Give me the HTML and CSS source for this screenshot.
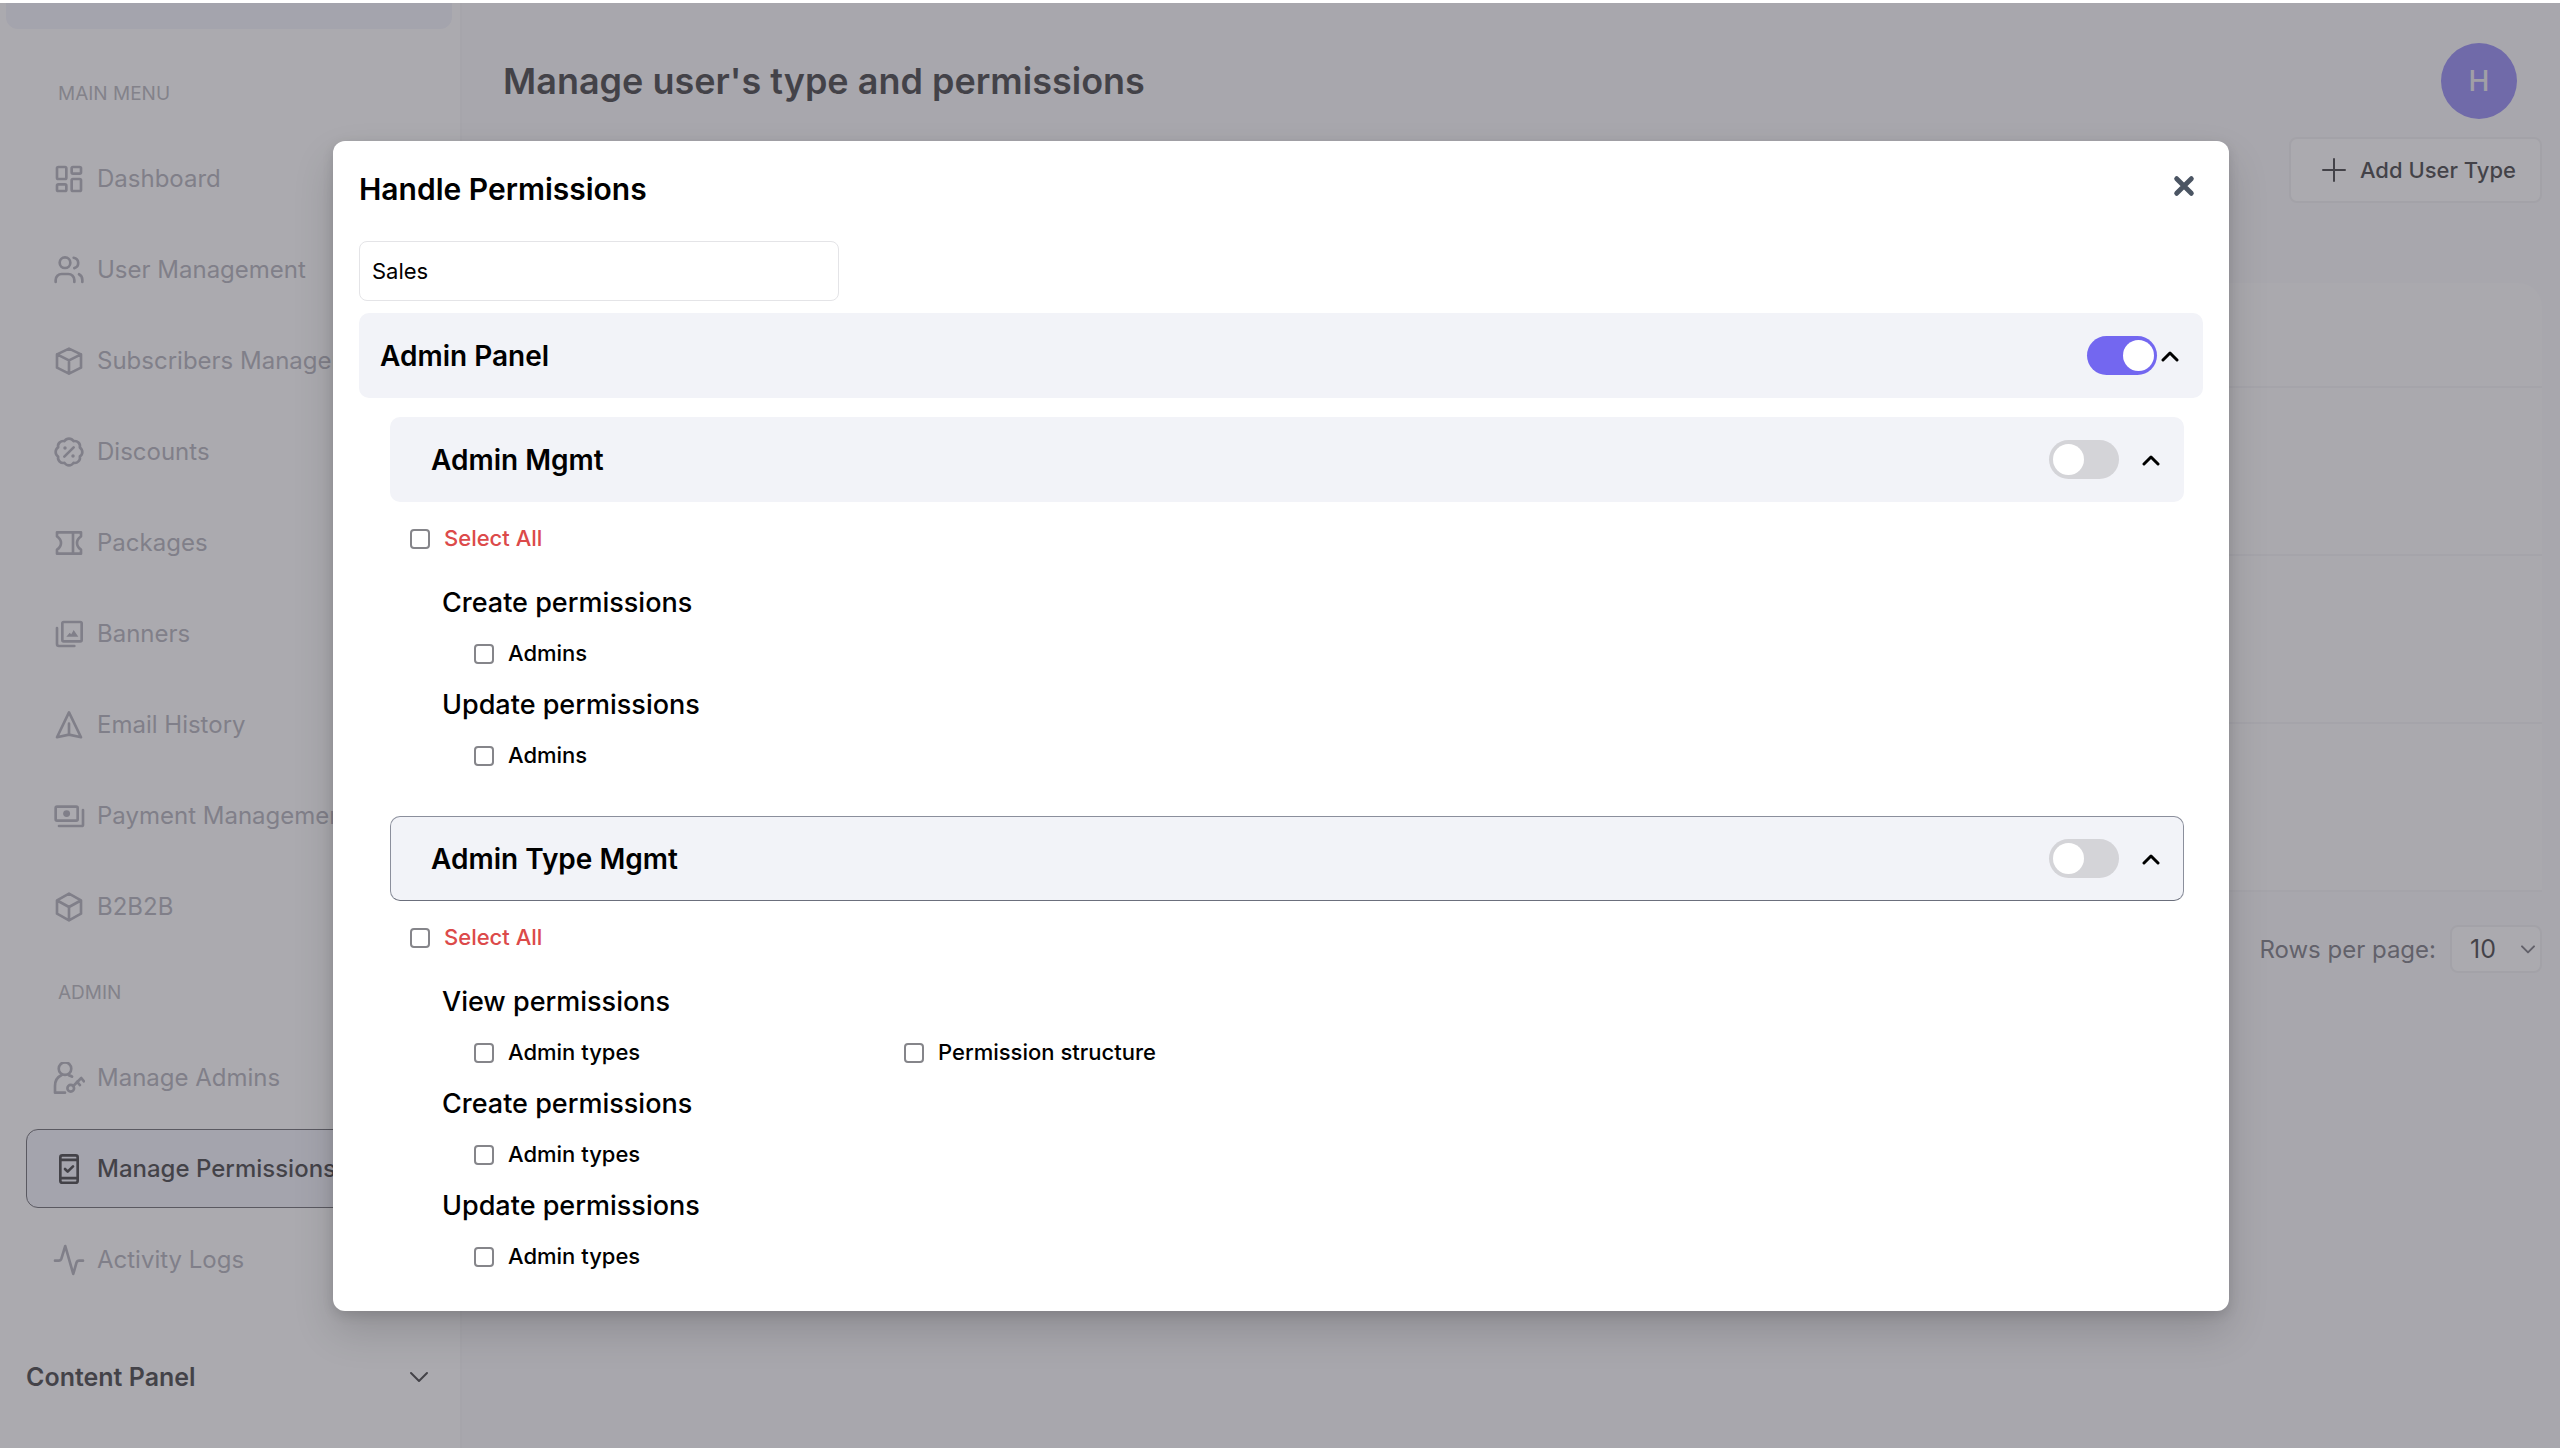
FILE: index.html
```html
<!DOCTYPE html>
<html lang="en">
<head>
    <meta charset="UTF-8">
    <meta name="viewport" content="width=device-width, initial-scale=1.0">
    <title>Manage user's type and permissions</title>
    <link rel="stylesheet" href="styles.css">
</head>
<body>
    <div class="page">
        <aside class="sidebar">
            <div class="panel-top"></div>
            <h2 class="menu-label">MAIN MENU</h2>
            <nav class="menu">
                <a href="#" class="menu-item">
                    <svg class="icon" viewBox="0 0 24 24"><rect x="3" y="3" width="7" height="9" rx="1"/><rect x="14" y="3" width="7" height="5" rx="1"/><rect x="14" y="12" width="7" height="9" rx="1"/><rect x="3" y="16" width="7" height="5" rx="1"/></svg>
                    <span>Dashboard</span>
                </a>
                <a href="#" class="menu-item">
                    <svg class="icon" viewBox="0 0 24 24"><circle cx="9" cy="6.5" r="4"/><path d="M2 21v-1.5A4.5 4.5 0 0 1 6.5 15h5a4.5 4.5 0 0 1 4.5 4.5V21M15.5 2.8a4 4 0 0 1 .5 7.8M19.500 15.200c1.500.8 2.500 2.300 2.500 4.300V21"/></svg>
                    <span>User Management</span>
                </a>
                <a href="#" class="menu-item">
                    <svg class="icon" viewBox="0 0 24 24"><path d="M12 2.700 21 7v10l-9 4.500L3 17V7zM3 7l9 4.500L21 7M12 11.500v10"/></svg>
                    <span>Subscribers Management</span>
                </a>
                <a href="#" class="menu-item">
                    <svg class="icon" viewBox="0 0 24 24"><path d="M3.850 8.620a4 4 0 0 1 4.780-4.770 4 4 0 0 1 6.740 0 4 4 0 0 1 4.780 4.780 4 4 0 0 1 0 6.740 4 4 0 0 1-4.770 4.780 4 4 0 0 1-6.750 0 4 4 0 0 1-4.780-4.770 4 4 0 0 1 0-6.760zM15.500 8.500l-7 7"/><circle class="dot" cx="9" cy="9" r="1.300"/><circle class="dot" cx="15" cy="15" r="1.300"/></svg>
                    <span>Discounts</span>
                </a>
                <a href="#" class="menu-item">
                    <svg class="icon" viewBox="0 0 24 24"><path d="M3 4h18v3c-1.500 1-3 3-3 5s1.500 4 3 5v3H3v-3c1.500-1 3-3 3-5S4.500 8 3 7zM15 4v16"/></svg>
                    <span>Packages</span>
                </a>
                <a href="#" class="menu-item">
                    <svg class="icon" viewBox="0 0 24 24"><rect x="7" y="3" width="14.500" height="14.500" rx="1"/><path d="M3 7.500v12a1.500 1.500 0 0 0 1.500 1.500H16"/><path class="dot" d="m10 14 2.500-3 1.200 1.200L15.500 9l3.500 5z"/></svg>
                    <span>Banners</span>
                </a>
                <a href="#" class="menu-item">
                    <svg class="icon" viewBox="0 0 24 24"><path d="m12 2.500 9 18.700-9-2-9 2zM12 11v8"/></svg>
                    <span>Email History</span>
                </a>
                <a href="#" class="menu-item">
                    <svg class="icon" viewBox="0 0 24 24"><rect x="2" y="5" width="16.500" height="10.500" rx="1"/><path d="M22.500 7.500v11a1 1 0 0 1-1 1h-17"/><circle class="dot" cx="10.200" cy="10.200" r="2.600"/></svg>
                    <span>Payment Management</span>
                </a>
                <a href="#" class="menu-item">
                    <svg class="icon" viewBox="0 0 24 24"><path d="m12 2 9 5v10l-9 5-9-5V7zM3.500 7.300 12 12l8.500-4.700M12 12v10"/></svg>
                    <span>B2B2B</span>
                </a>
            </nav>
            <h2 class="menu-label">ADMIN</h2>
            <nav class="menu">
                <a href="#" class="menu-item">
                    <svg class="icon" viewBox="0 0 24 24"><circle cx="9" cy="5" r="4.700"/><path d="M9 23H1.500v-5c0-4 2-6.800 5-8.200M12 10c.9.200 1.600.5 2.300 1"/><circle cx="13.300" cy="19.700" r="2.500"/><path d="m15.200 18 6-6 2 2.500M18 14.800l2.200 2.500"/></svg>
                    <span>Manage Admins</span>
                </a>
                <a href="#" class="menu-item active">
                    <svg class="icon" viewBox="0 0 24 24"><rect x="5.500" y="1.800" width="13" height="20.500" rx="1.500"/><path d="M5.500 5.200h13M5.500 18.800h13M9 12l2 2 4-4"/></svg>
                    <span>Manage Permissions</span>
                </a>
                <a href="#" class="menu-item">
                    <svg class="icon" viewBox="0 0 24 24"><path d="M1.500 12.500H4.300c1 0 1.700-.6 2-1.500L9.200 1.500l6 21 2.400-8.500c.3-.9 1-1.500 2-1.500h2.900"/></svg>
                    <span>Activity Logs</span>
                </a>
            </nav>
            <button type="button" class="panel-toggle">
                Content Panel
                <svg class="chevron" viewBox="0 0 24 24"><path d="m4 8 8 8 8-8"/></svg>
            </button>
        </aside>

        <main class="main">
            <header class="header">
                <h1>Manage user's type and permissions</h1>
                <div class="avatar">H</div>
            </header>
            <div class="toolbar">
                <button type="button" class="add-button">
                    <svg class="plus" viewBox="0 0 24 24"><path d="M12 1v22M1 12h22"/></svg>
                    Add User Type
                </button>
            </div>
            <div class="card">
                <div class="card-head"></div>
                <div class="card-row"></div>
                <div class="card-row"></div>
                <div class="card-row"></div>
            </div>
            <div class="pagination">
                <label for="rowsPerPage">Rows per page:</label>
                <div class="select-wrap">
                    <select id="rowsPerPage">
                        <option>10</option>
                        <option>20</option>
                        <option>50</option>
                    </select>
                    <svg class="select-arrow" viewBox="0 0 24 24"><path d="m3 8 9 9 9-9"/></svg>
                </div>
            </div>
        </main>
    </div>

    <div class="overlay">
        <div class="modal" role="dialog" aria-modal="true" aria-labelledby="modalTitle">
            <div class="modal-header">
                <h2 id="modalTitle">Handle Permissions</h2>
                <button type="button" class="close" aria-label="Close">
                    <svg viewBox="0 0 18 18"><path d="m3 3 12 12M15 3 3 15"/></svg>
                </button>
            </div>
            <input type="text" class="name-input" aria-label="User type name" value="Sales">

            <div class="bar">
                <h3>Admin Panel</h3>
                <input type="checkbox" class="switch" aria-label="Admin Panel" checked>
                <button type="button" class="collapse" aria-label="Collapse Admin Panel">
                    <svg class="chevron-up" viewBox="0 0 18 12"><path d="m2 10 7-7 7 7"/></svg>
                </button>
            </div>

            <section class="module">
                <div class="bar sub-bar">
                    <h3>Admin Mgmt</h3>
                    <input type="checkbox" class="switch" aria-label="Admin Mgmt">
                    <button type="button" class="collapse" aria-label="Collapse Admin Mgmt">
                        <svg class="chevron-up" viewBox="0 0 18 12"><path d="m2 10 7-7 7 7"/></svg>
                    </button>
                </div>
                <label class="check select-all"><input type="checkbox"> Select All</label>
                <div class="groups">
                    <h4>Create permissions</h4>
                    <div class="options">
                        <label class="check"><input type="checkbox"> Admins</label>
                    </div>
                    <h4>Update permissions</h4>
                    <div class="options">
                        <label class="check"><input type="checkbox"> Admins</label>
                    </div>
                </div>
            </section>

            <section class="module">
                <div class="bar sub-bar focused">
                    <h3>Admin Type Mgmt</h3>
                    <input type="checkbox" class="switch" aria-label="Admin Type Mgmt">
                    <button type="button" class="collapse" aria-label="Collapse Admin Type Mgmt">
                        <svg class="chevron-up" viewBox="0 0 18 12"><path d="m2 10 7-7 7 7"/></svg>
                    </button>
                </div>
                <label class="check select-all"><input type="checkbox"> Select All</label>
                <div class="groups">
                    <h4>View permissions</h4>
                    <div class="options">
                        <label class="check"><input type="checkbox"> Admin types</label>
                        <label class="check"><input type="checkbox"> Permission structure</label>
                    </div>
                    <h4>Create permissions</h4>
                    <div class="options">
                        <label class="check"><input type="checkbox"> Admin types</label>
                    </div>
                    <h4>Update permissions</h4>
                    <div class="options">
                        <label class="check"><input type="checkbox"> Admin types</label>
                    </div>
                </div>
            </section>
        </div>
    </div>
</body>
</html>
```
FILE: styles.css
```css
* {
    box-sizing: border-box;
}
body {
    margin: 0;
    font-family: Inter, Roboto, sans-serif;
    font-size: 24px;
    color: #09090b;
    background-color: #fff;
}
h1, h2, h3, h4 {
    margin: 0;
}
button, input, select {
    font-family: inherit;
    color: inherit;
}
button {
    cursor: pointer;
}
svg {
    fill: none;
    stroke: currentColor;
    stroke-width: 2;
    stroke-linecap: round;
    stroke-linejoin: round;
    flex-shrink: 0;
}

/* Page behind the dialog */
.page {
    display: flex;
    min-height: 100vh;
    border-top: 3px solid #fff;
}
.sidebar {
    width: 462px;
    flex-shrink: 0;
    border-right: 2px solid #f4f4f6;
}
.panel-top {
    height: 26px;
    margin: 0 8px 0 6px;
    border-radius: 0 0 12px 12px;
    background-color: #eff0fa;
}
.menu-label {
    padding-left: 58px;
    font-size: 19px;
    font-weight: 400;
    line-height: 24px;
    color: #a1a1a8;
    margin: 53px 0 33px;
}
.menu {
    display: flex;
    flex-direction: column;
    gap: 12px;
    padding: 0 26px;
}
.menu-item {
    display: flex;
    align-items: center;
    gap: 12px;
    height: 79px;
    padding: 0 26px;
    border: 1px solid transparent;
    border-radius: 12px;
    color: #9a9aa4;
    text-decoration: none;
    white-space: nowrap;
}
.menu-item.active {
    border-color: #3f3f46;
    background-color: #eff0fa;
    color: #09090b;
    font-weight: 500;
}
.menu + .menu-label {
    margin: 35px 0 33px;
}
.icon {
    width: 32px;
    height: 32px;
}
.icon .dot {
    fill: currentColor;
    stroke: none;
}
.panel-toggle {
    display: flex;
    align-items: center;
    justify-content: space-between;
    width: 100%;
    margin-top: 60px;
    padding: 0 29px 0 26px;
    border: none;
    background: none;
    font-size: 25px;
    font-weight: 600;
    line-height: 36px;
}
.chevron {
    width: 24px;
    height: 24px;
}

.main {
    flex: 1;
    padding: 40px 18px 0 41px;
    background-color: #f8f8fa;
}
.header {
    display: flex;
    align-items: center;
    justify-content: space-between;
    padding-right: 25px;
}
.header h1 {
    font-size: 36px;
    font-weight: 600;
}
.avatar {
    display: flex;
    align-items: center;
    justify-content: center;
    width: 76px;
    height: 76px;
    border-radius: 50%;
    background-color: #7367f0;
    color: #e4e4ea;
    font-size: 28px;
    font-weight: 500;
}
.toolbar {
    display: flex;
    justify-content: flex-end;
    margin-top: 18px;
}
.add-button {
    display: flex;
    align-items: center;
    gap: 14px;
    height: 66px;
    padding: 0 24px 0 31px;
    border: 2px solid #ebebee;
    border-radius: 8px;
    background-color: #fff;
    font-size: 22px;
    font-weight: 500;
}
.plus {
    width: 24px;
    height: 24px;
}
.card {
    margin-top: 80px;
    border-radius: 24px 24px 0 0;
    background-color: #fcfcfd;
}
.card-head {
    height: 105px;
    border-bottom: 2px solid #f0f0f3;
}
.card-row {
    height: 168px;
    border-bottom: 2px solid #f0f0f3;
}
.pagination {
    display: flex;
    align-items: center;
    justify-content: flex-end;
    gap: 14px;
    margin-top: 33px;
    color: #52525b;
}
.select-wrap {
    position: relative;
}
.select-wrap select {
    appearance: none;
    width: 92px;
    height: 48px;
    padding: 0 0 0 18px;
    border: 2px solid #ebebee;
    border-radius: 8px;
    background-color: #fff;
    color: #09090b;
    font-size: 25px;
}
.select-arrow {
    position: absolute;
    right: 6px;
    top: 16px;
    width: 16px;
    height: 16px;
    stroke-width: 3;
    pointer-events: none;
}

/* Dialog */
.overlay {
    position: absolute;
    top: 3px;
    left: 0;
    right: 0;
    bottom: 0;
    padding: 138px 331px 0 333px;
    background-color: rgba(110, 109, 117, 0.58);
}
.modal {
    padding: 26px 26px 29px;
    border-radius: 12px;
    background-color: #fff;
    color: #000;
    box-shadow: 0 20px 40px rgba(0, 0, 0, 0.15), 0 4px 12px rgba(0, 0, 0, 0.12);
}
.modal-header {
    display: flex;
    align-items: flex-start;
    justify-content: space-between;
}
.modal-header h2 {
    font-size: 30px;
    font-weight: 600;
    line-height: 44px;
}
.close {
    display: flex;
    padding: 8px;
    border: none;
    background: none;
    color: #4b5563;
}
.close svg {
    width: 22px;
    height: 22px;
    stroke-width: 4;
}
.name-input {
    display: block;
    width: 480px;
    height: 60px;
    margin: 30px 0 12px;
    padding: 0 12px;
    border: 1px solid #e4e4e7;
    border-radius: 8px;
    font-size: 22px;
}
.bar {
    display: flex;
    align-items: center;
    height: 85px;
    padding: 0 23px 0 20px;
    border: 1px solid transparent;
    border-radius: 10px;
    background-color: #f2f3f8;
}
.bar h3 {
    flex: 1;
    font-size: 28px;
    font-weight: 600;
}
.sub-bar {
    padding: 0 23px 0 40px;
}
.sub-bar .collapse {
    margin-left: 23px;
}
.bar.focused {
    border-color: #8b8f9c;
    border-bottom-color: #6b6f7c;
}
.switch {
    appearance: none;
    display: flex;
    align-items: center;
    width: 70px;
    height: 39px;
    margin: 0;
    padding: 0 4px;
    border-radius: 20px;
    background-color: #d4d4d8;
}
.switch::before {
    content: "";
    width: 31px;
    height: 31px;
    border-radius: 50%;
    background-color: #fff;
}
.switch:checked {
    justify-content: flex-end;
    padding: 0 3px;
    background-color: #7367f0;
}
.collapse {
    display: flex;
    margin-left: 4px;
    padding: 0;
    border: none;
    background: none;
}
.chevron-up {
    width: 18px;
    height: 12px;
    stroke-width: 3;
}
.module {
    margin: 19px 19px 35px 31px;
}
.module:last-child {
    margin-bottom: 0;
}
.check {
    display: flex;
    align-items: center;
    gap: 14px;
    font-size: 22px;
    font-weight: 500;
    line-height: 51px;
    white-space: nowrap;
}
.check input {
    width: 20px;
    height: 20px;
    margin: 0;
    appearance: none;
    border: 2px solid #85858a;
    border-radius: 4px;
    background-color: #fff;
}
.select-all {
    margin: 11px 0 13px 20px;
    color: #dc4a4a;
}
.groups {
    padding-left: 52px;
}
.groups h4 {
    font-size: 27px;
    font-weight: 500;
    line-height: 51px;
}
.options {
    display: grid;
    grid-template-columns: repeat(auto-fill, 400px);
    column-gap: 30px;
    padding-left: 32px;
}
```
